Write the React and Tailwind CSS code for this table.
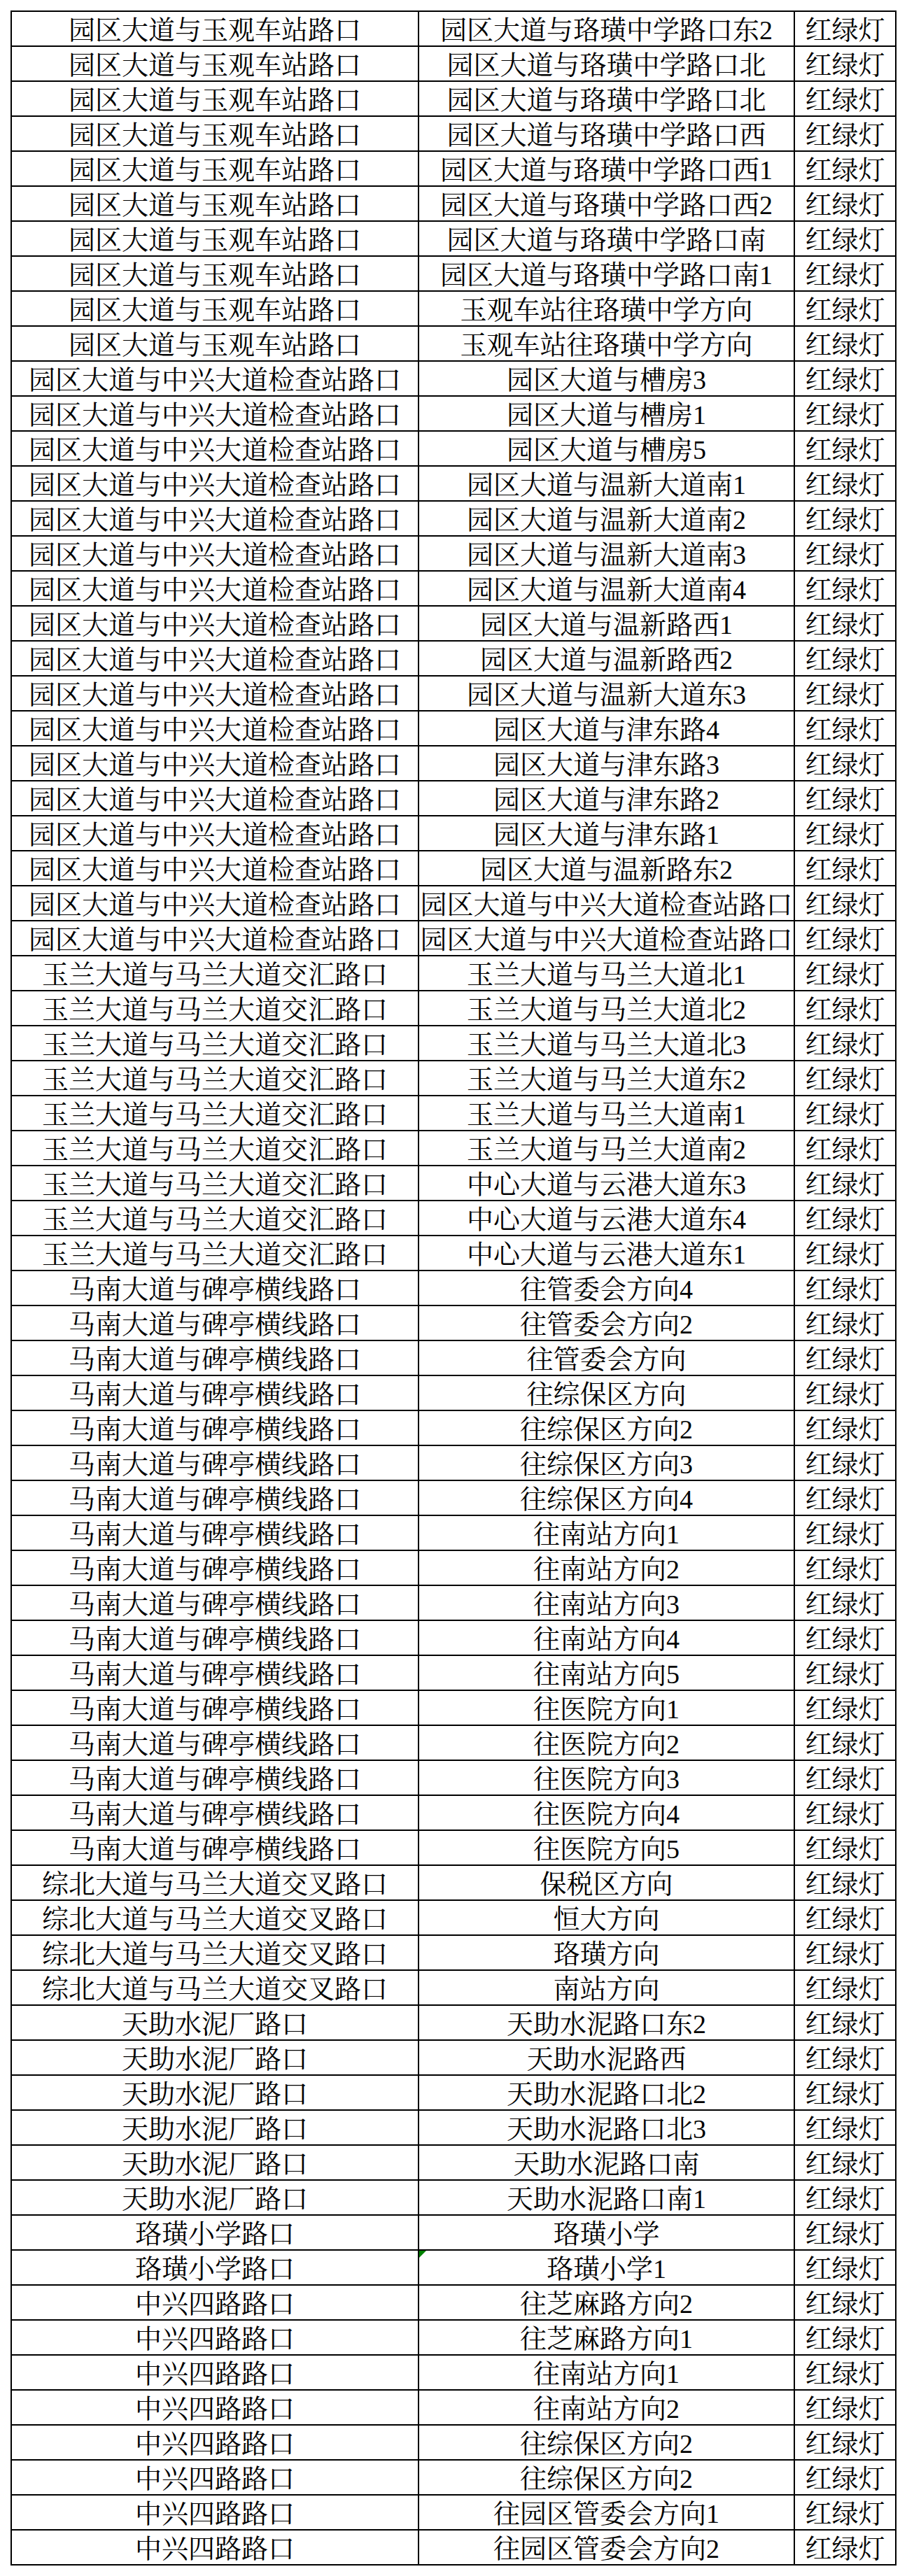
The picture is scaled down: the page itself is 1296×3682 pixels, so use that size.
import React from "react";

const groups = [
  ["园区大道与玉观车站路口", [
    "园区大道与珞璜中学路口东2",
    "园区大道与珞璜中学路口北",
    "园区大道与珞璜中学路口北",
    "园区大道与珞璜中学路口西",
    "园区大道与珞璜中学路口西1",
    "园区大道与珞璜中学路口西2",
    "园区大道与珞璜中学路口南",
    "园区大道与珞璜中学路口南1",
    "玉观车站往珞璜中学方向",
    "玉观车站往珞璜中学方向",
  ]],
  ["园区大道与中兴大道检查站路口", [
    "园区大道与槽房3",
    "园区大道与槽房1",
    "园区大道与槽房5",
    "园区大道与温新大道南1",
    "园区大道与温新大道南2",
    "园区大道与温新大道南3",
    "园区大道与温新大道南4",
    "园区大道与温新路西1",
    "园区大道与温新路西2",
    "园区大道与温新大道东3",
    "园区大道与津东路4",
    "园区大道与津东路3",
    "园区大道与津东路2",
    "园区大道与津东路1",
    "园区大道与温新路东2",
    "园区大道与中兴大道检查站路口",
    "园区大道与中兴大道检查站路口",
  ]],
  ["玉兰大道与马兰大道交汇路口", [
    "玉兰大道与马兰大道北1",
    "玉兰大道与马兰大道北2",
    "玉兰大道与马兰大道北3",
    "玉兰大道与马兰大道东2",
    "玉兰大道与马兰大道南1",
    "玉兰大道与马兰大道南2",
    "中心大道与云港大道东3",
    "中心大道与云港大道东4",
    "中心大道与云港大道东1",
  ]],
  ["马南大道与碑亭横线路口", [
    "往管委会方向4",
    "往管委会方向2",
    "往管委会方向",
    "往综保区方向",
    "往综保区方向2",
    "往综保区方向3",
    "往综保区方向4",
    "往南站方向1",
    "往南站方向2",
    "往南站方向3",
    "往南站方向4",
    "往南站方向5",
    "往医院方向1",
    "往医院方向2",
    "往医院方向3",
    "往医院方向4",
    "往医院方向5",
  ]],
  ["综北大道与马兰大道交叉路口", [
    "保税区方向",
    "恒大方向",
    "珞璜方向",
    "南站方向",
  ]],
  ["天助水泥厂路口", [
    "天助水泥路口东2",
    "天助水泥路西",
    "天助水泥路口北2",
    "天助水泥路口北3",
    "天助水泥路口南",
    "天助水泥路口南1",
  ]],
  ["珞璜小学路口", [
    "珞璜小学",
    "珞璜小学1",
  ]],
  ["中兴四路路口", [
    "往芝麻路方向2",
    "往芝麻路方向1",
    "往南站方向1",
    "往南站方向2",
    "往综保区方向2",
    "往综保区方向2",
    "往园区管委会方向1",
    "往园区管委会方向2",
  ]],
];

const rows = [];
groups.forEach(([a, list]) => list.forEach((b) => rows.push([a, b])));

const cell =
  "relative h-[50px] border-r-2 border-b-2 border-black flex items-center justify-center whitespace-nowrap pt-[4px]";

export default function App() {
  return (
    <div className="w-[1296px] min-h-[3682px] bg-white pt-[15px] pl-[15px]">
      <div
        className="grid grid-cols-[582px_537px_145px] w-fit border-t-2 border-l-2 border-black text-black text-[38px] leading-none"
        style={{ fontFamily: '"Liberation Serif", "Noto Serif CJK SC", "Noto Sans CJK SC", serif' }}
      >
        {rows.map(([a, b], i) => (
          <React.Fragment key={i}>
            <div className={cell}>{a}</div>
            <div className={cell}>
              {i === 64 && (
                <span className="absolute left-0 top-0 w-0 h-0 border-t-[10px] border-r-[10px] border-t-[#008000] border-r-transparent" />
              )}
              {b}
            </div>
            <div className={cell}>红绿灯</div>
          </React.Fragment>
        ))}
      </div>
    </div>
  );
}
